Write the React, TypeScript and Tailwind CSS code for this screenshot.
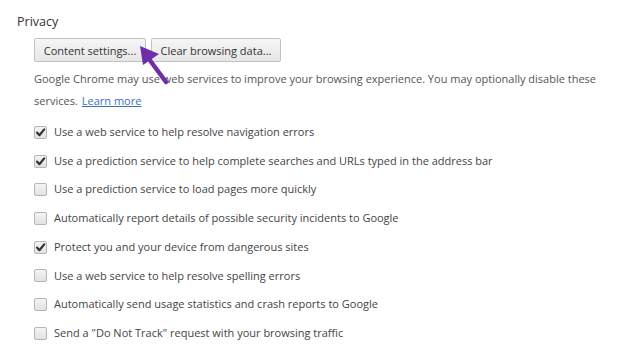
import React from "react";

const items: { label: string; checked: boolean }[] = [
  { label: "Use a web service to help resolve navigation errors", checked: true },
  { label: "Use a prediction service to help complete searches and URLs typed in the address bar", checked: true },
  { label: "Use a prediction service to load pages more quickly", checked: false },
  { label: "Automatically report details of possible security incidents to Google", checked: false },
  { label: "Protect you and your device from dangerous sites", checked: true },
  { label: "Use a web service to help resolve spelling errors", checked: false },
  { label: "Automatically send usage statistics and crash reports to Google", checked: false },
  { label: 'Send a "Do Not Track" request with your browsing traffic', checked: false },
];

function Box({ checked }: { checked: boolean }) {
  return (
    <span className="relative inline-block w-[13px] h-[13px] shrink-0 rounded-[2px] border border-[#b5b5b5] bg-gradient-to-b from-[#f4f4f4] to-[#e2e2e2]">
      {checked && (
        <svg viewBox="0 0 13 13" className="absolute left-[-1px] top-[-1px] w-[13px] h-[13px]">
          <path d="M3 6.6 L5.4 9.2 L10.2 3.4" fill="none" stroke="#333" strokeWidth="2.2" strokeLinecap="round" strokeLinejoin="round" />
        </svg>
      )}
    </span>
  );
}

export default function App() {
  return (
    <div className="relative w-[635px] h-[357px] bg-white overflow-hidden text-[#444]" style={{ fontFamily: '"Open Sans", "Noto Sans", sans-serif' }}>
      <div className="pl-[17px] pt-[13px]">
        <div className="text-[12.5px] leading-[17px] text-[#333]">Privacy</div>
        <div className="pl-[17px]">
          <div className="flex gap-[5px] mt-[8px]">
            <button className="h-[24px] rounded-[2px] border border-[#c2c2c2] bg-gradient-to-b from-[#f6f6f6] to-[#e6e6e6] text-[11px] text-[#333] leading-none w-[112px] whitespace-nowrap">Content settings...</button>
            <button className="h-[24px] rounded-[2px] border border-[#c2c2c2] bg-gradient-to-b from-[#f6f6f6] to-[#e6e6e6] text-[11px] text-[#333] leading-none w-[130px] whitespace-nowrap">Clear browsing data...</button>
          </div>
          <div className="mt-[6px] text-[11px] leading-[22px] text-[#555] w-[570px]">
            <div>Google Chrome may use web services to improve your browsing experience. You may optionally disable these</div>
            <div className="flex gap-[4px]">
              <span>services.</span>
              <span className="text-[#3a6fc4] underline">Learn more</span>
            </div>
          </div>
          <div className="mt-[6px] flex flex-col">
            {items.map((it) => (
              <div key={it.label} className="flex items-center gap-[7px] h-[28.7px]">
                <Box checked={it.checked} />
                <span className="text-[11px] text-[#444] whitespace-nowrap">{it.label}</span>
              </div>
            ))}
          </div>
        </div>
      </div>
      <svg className="absolute left-0 top-0 pointer-events-none" width="635" height="357">
        <line x1="166" y1="82" x2="146" y2="55" stroke="#6f2da8" strokeWidth="4.5" strokeLinecap="round" />
        <polygon points="140,46 159,54 143,65" fill="#6f2da8" />
      </svg>
    </div>
  );
}
